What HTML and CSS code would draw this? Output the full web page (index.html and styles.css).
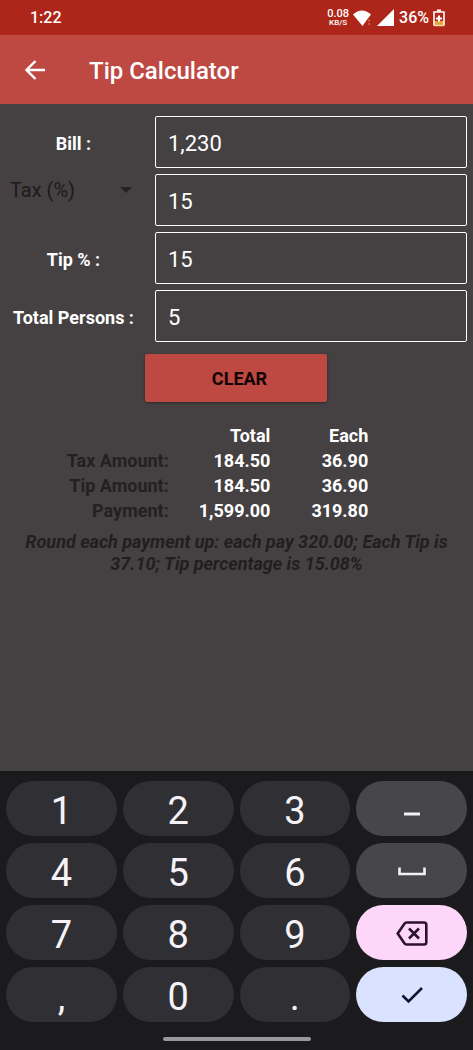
FILE: index.html
```html
<!DOCTYPE html>
<html lang="en">
<head>
<meta charset="utf-8">
<meta name="viewport" content="width=device-width, initial-scale=1">
<title>Tip Calculator</title>
<link rel="stylesheet" href="styles.css">
</head>
<body>
<div class="screen">
  <div class="status">
    <span class="clock">1:22</span>
    <div class="indicators">
      <span class="speed"><span class="speed-value">0.08</span><span class="speed-unit">KB/S</span></span>
      <svg class="wifi" width="20" height="16" viewBox="0 0 20 16" aria-hidden="true"><path d="M0 4.500Q9-3.500 18 4.500L14.500 9 9.500 16z" fill="#fff"/><path d="M16 9.500v2M16 13v2" stroke="#e0645a" stroke-width="1.500"/></svg>
      <svg class="signal" width="17" height="17" viewBox="0 0 17 17" aria-hidden="true"><path d="M0 17L17 0v17z" fill="#fff"/></svg>
      <span class="percent">36%</span>
      <svg class="battery" width="12" height="18" viewBox="0 0 12 18" aria-hidden="true"><path d="M1 12h10v5H1z" fill="#e8a33c"/><path d="M4 1.500h4" stroke="#fff" stroke-width="2"/><path d="M1 16V3h10v13" fill="none" stroke="#fff" stroke-width="1.600"/><path d="M0.500 16.500h11" stroke="#f6d9a0" stroke-width="1.500"/><path d="M6 6.500v6M3 9.500h6" stroke="#fff" stroke-width="2"/></svg>
    </div>
  </div>
  <header class="appbar">
    <button class="back" type="button" aria-label="Back"><svg width="20" height="20" viewBox="0 0 20 20" aria-hidden="true"><path d="M20 10H2M10.500 1L1.500 10l9 9" fill="none" stroke="#fff" stroke-width="2.400"/></svg></button>
    <h1 class="title">Tip Calculator</h1>
  </header>
  <main class="content">
    <form class="form">
      <label class="label" for="bill">Bill :</label>
      <input class="field" id="bill" type="text" inputmode="decimal" value="1,230">
      <div class="picker">
        <select class="select" id="mode" aria-label="Tax type"><option>Tax (%)</option></select>
        <svg class="arrow" width="12" height="6" viewBox="0 0 12 6" aria-hidden="true"><path d="M0 0h12L6 6z" fill="#242223"/></svg>
      </div>
      <input class="field" id="tax" type="text" inputmode="decimal" value="15" aria-label="Tax">
      <label class="label" for="tip">Tip % :</label>
      <input class="field" id="tip" type="text" inputmode="decimal" value="15">
      <label class="label" for="persons">Total Persons :</label>
      <input class="field" id="persons" type="text" inputmode="numeric" value="5">
      <button class="clear" type="button">CLEAR</button>
    </form>
    <table class="results">
      <thead><tr><td></td><th scope="col">Total</th><th scope="col">Each</th></tr></thead>
      <tbody>
        <tr><th scope="row">Tax Amount:</th><td>184.50</td><td>36.90</td></tr>
        <tr><th scope="row">Tip Amount:</th><td>184.50</td><td>36.90</td></tr>
        <tr><th scope="row">Payment:</th><td>1,599.00</td><td>319.80</td></tr>
      </tbody>
    </table>
    <p class="note">Round each payment up: each pay 320.00; Each Tip is 37.10; Tip percentage is 15.08%</p>
  </main>
  <div class="keyboard">
    <div class="keys">
      <button class="key" type="button">1</button>
      <button class="key" type="button">2</button>
      <button class="key" type="button">3</button>
      <button class="key key-alt" type="button" aria-label="Minus"><svg width="32" height="32" viewBox="0 0 32 32" aria-hidden="true"><path d="M8 21h16" stroke="#f4f1f6" stroke-width="3"/></svg></button>
      <button class="key" type="button">4</button>
      <button class="key" type="button">5</button>
      <button class="key" type="button">6</button>
      <button class="key key-alt" type="button" aria-label="Space"><svg width="32" height="32" viewBox="0 0 32 32" aria-hidden="true"><path d="M3.500 12.500V19h25v-6.500" fill="none" stroke="#f4f1f6" stroke-width="2.600"/></svg></button>
      <button class="key" type="button">7</button>
      <button class="key" type="button">8</button>
      <button class="key" type="button">9</button>
      <button class="key key-delete" type="button" aria-label="Delete"><svg width="32" height="32" viewBox="0 0 32 32" aria-hidden="true"><path d="M10.500 5.500H28q2.300 0 2.300 2.300v17.400q0 2.300-2.300 2.300H10.500Q9.200 27.500 8.400 26.300L1.700 16.500 8.400 6.700Q9.200 5.500 10.500 5.500zM13 11.500l10 10M23 11.500l-10 10" fill="none" stroke="#2b1230" stroke-width="2.600"/></svg></button>
      <button class="key" type="button">,</button>
      <button class="key" type="button">0</button>
      <button class="key" type="button">.</button>
      <button class="key key-done" type="button" aria-label="Done"><svg width="32" height="32" viewBox="0 0 32 32" aria-hidden="true"><path d="M6.500 16.500l6 6L26 9" fill="none" stroke="#0b1530" stroke-width="2.600"/></svg></button>
    </div>
    <div class="handle"></div>
  </div>
</div>
</body>
</html>
```

FILE: styles.css
```css
* { box-sizing: border-box; }

body {
  margin: 0;
  background: #454142;
  color: #fff;
  font-family: Roboto, "Liberation Sans", sans-serif;
}

button, input, select { font: inherit; color: inherit; }

button {
  border: 0;
  padding: 0;
  cursor: pointer;
}

.screen {
  display: flex;
  flex-direction: column;
  min-height: 100vh;
}

.status {
  display: flex;
  align-items: center;
  justify-content: space-between;
  height: 35px;
  padding: 0 28px 0 30px;
  background: #ae2619;
  font-size: 16px;
  font-weight: 500;
}

.indicators {
  display: flex;
  align-items: center;
  gap: 4px;
}

.speed {
  display: flex;
  flex-direction: column;
  align-items: center;
}

.speed-value { font-size: 11px; line-height: 11px; }
.speed-unit { font-size: 8px; line-height: 8px; }

.percent { margin-left: 1px; }

.appbar {
  display: flex;
  align-items: center;
  height: 69px;
  padding: 0 25px;
  gap: 44px;
  background: #be4842;
}

.back {
  display: flex;
  background: none;
}

.title {
  margin: 0;
  padding-top: 2px;
  font-size: 24px;
  font-weight: 500;
}

.content {
  flex: 1;
  padding: 12px 6px 16px 0;
}

.form {
  display: grid;
  grid-template-columns: 147px 1fr;
  column-gap: 8px;
  row-gap: 6px;
}

.label {
  padding-top: 3px;
  align-self: center;
  text-align: center;
  font-size: 18px;
  font-weight: 700;
}

.field {
  width: 100%;
  min-width: 0;
  height: 52px;
  padding: 2px 12px 0;
  border: 1px solid #fff;
  border-radius: 2px;
  background: none;
  font-size: 22px;
  outline: 0;
}

.picker {
  display: flex;
  align-items: center;
  align-self: start;
  height: 31px;
  padding: 0 15px 0 10px;
}

.select {
  flex: 1;
  appearance: none;
  border: 0;
  padding: 0;
  background: none;
  color: #1c1a1b;
  font-size: 20px;
}

.arrow { flex: none; pointer-events: none; }

.clear {
  grid-column: 1 / -1;
  justify-self: center;
  width: 182px;
  height: 48px;
  margin: 6px 0 0 4px;
  padding-left: 8px;
  border-radius: 2px;
  background: #be4842;
  box-shadow: 0 1px 3px rgba(0, 0, 0, 0.4);
  color: #120303;
  font-size: 18px;
  font-weight: 700;
}

.results {
  margin: 21px auto 0;
  border-collapse: collapse;
  font-size: 18px;
  line-height: 25px;
  font-weight: 700;
}

.results th, .results td {
  padding: 0 0 0 30px;
  text-align: right;
}

.results td:last-child, .results th:last-child {
  padding-left: 41px;
  padding-right: 32px;
}

.results tr > :first-child { padding-left: 0; }
.results tbody th { color: #242021; }

.note {
  margin: 8px 0 0 6px;
  padding: 0 12px;
  text-align: center;
  color: #211e1f;
  font-size: 18px;
  line-height: 22px;
  font-style: italic;
  font-weight: 700;
}

.keyboard {
  padding: 10px 6px 9px;
  background: #1b1b1e;
}

.keys {
  display: grid;
  grid-template-columns: repeat(4, 1fr);
  gap: 7px 6px;
}

.key {
  display: flex;
  align-items: center;
  justify-content: center;
  height: 55px;
  padding-top: 4px;
  border-radius: 28px;
  background: #303034;
  color: #f6f3f8;
  font-size: 38px;
  line-height: 48px;
}

.key-alt, .key-delete, .key-done { padding-top: 0; }
.key-alt { background: #47474b; }
.key-delete { background: #fdd6fa; }
.key-done { background: #d9e2ff; }

.handle {
  width: 148px;
  height: 4px;
  margin: 15px auto 0;
  border-radius: 2px;
  background: #99999b;
}
```
